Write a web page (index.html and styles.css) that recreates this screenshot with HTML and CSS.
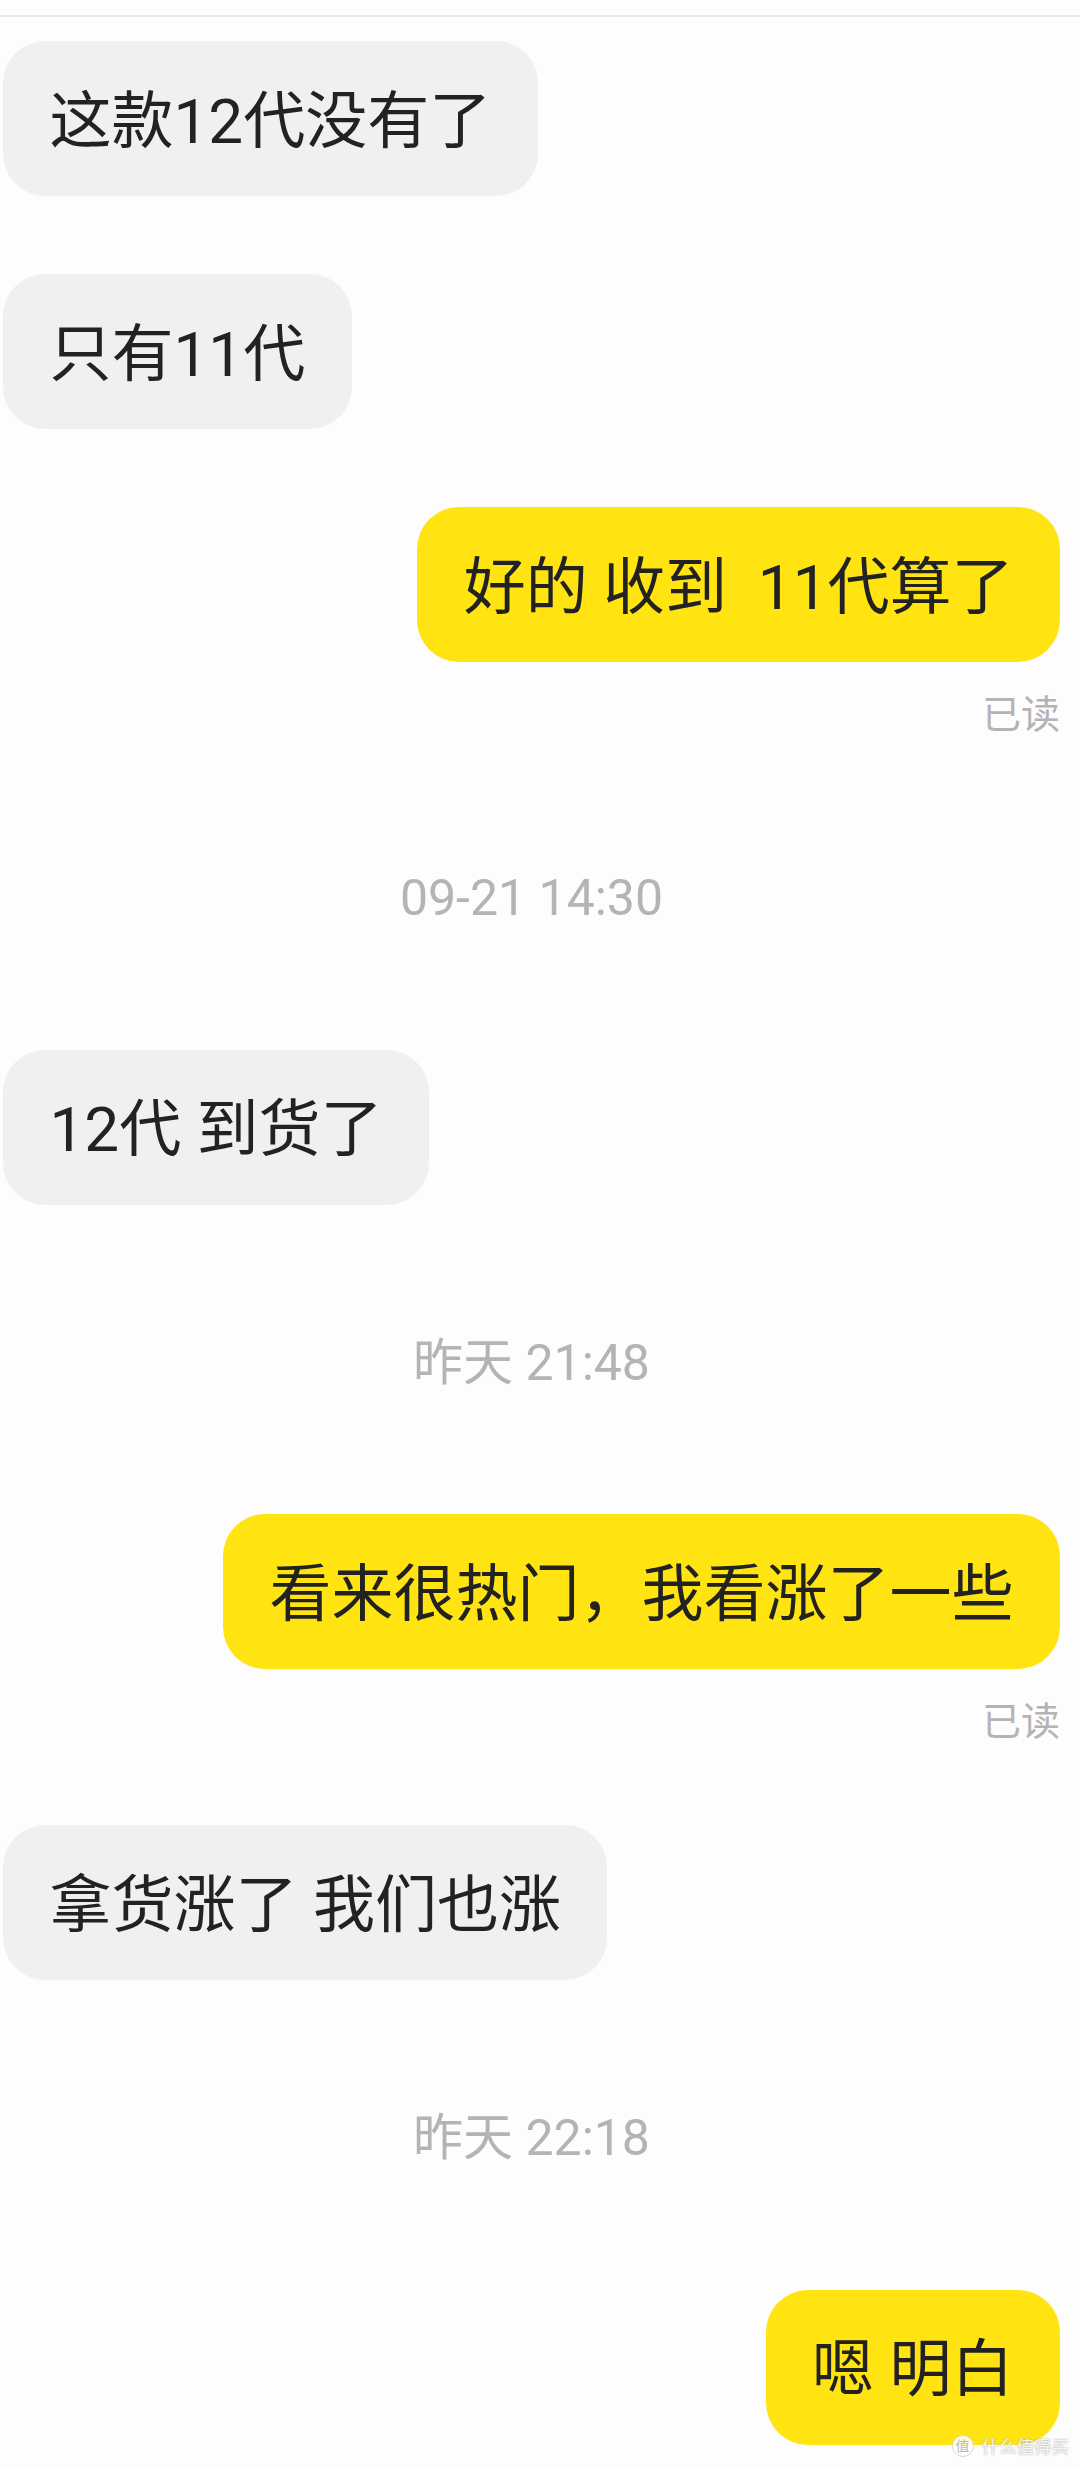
FILE: index.html
```html
<!DOCTYPE html>
<html lang="zh-CN">
<head>
    <meta charset="UTF-8">
    <meta name="viewport" content="width=device-width, initial-scale=1.0">
    <title>聊天记录</title>
    <link rel="stylesheet" href="styles.css">
</head>
<body>
    <div class="chat">
        <div class="msg left"><div class="bubble">这款12代没有了</div></div>
        <div class="msg left"><div class="bubble">只有11代</div></div>
        <div class="msg right">
            <div class="bubble">好的 收到&nbsp; 11代算了</div>
            <div class="read">已读</div>
        </div>

        <div class="time">09-21 14:30</div>
        <div class="msg left after-time"><div class="bubble">12代 到货了</div></div>

        <div class="time">昨天 21:48</div>
        <div class="msg right after-time">
            <div class="bubble">看来很热门，我看涨了一些</div>
            <div class="read">已读</div>
        </div>
        <div class="msg left"><div class="bubble">拿货涨了 我们也涨</div></div>

        <div class="time">昨天 22:18</div>
        <div class="msg right after-time"><div class="bubble">嗯 明白</div></div>
    </div>

    <div class="watermark">
        <span class="wm-logo">值</span>
        <span class="wm-text">什么值得买</span>
    </div>
</body>
</html>
```

FILE: styles.css
```css
* {
    box-sizing: border-box;
}

html, body {
    margin: 0;
    padding: 0;
}

body {
    position: relative;
    width: 1080px;
    height: 2469px;
    overflow: hidden;
    background-color: #fdfdfd;
    font-family: Roboto, "Noto Sans CJK SC", sans-serif;
}

.chat {
    height: 2469px;
    padding: 41px 20px 0 3px;
    display: flex;
    flex-direction: column;
    background: linear-gradient(#e9e9e9, #e9e9e9) 0 15px / 100% 2px no-repeat;
}

.msg {
    display: flex;
    flex-direction: column;
    flex-shrink: 0;
    margin-bottom: 78px;
}

.left {
    align-items: flex-start;
}

.right {
    align-items: flex-end;
}

.bubble {
    height: 155px;
    padding: 0 46.5px 6px;
    border-radius: 42px;
    display: flex;
    align-items: center;
    white-space: pre;
    font-size: 62px;
    color: #222222;
    background-color: #f0f0f3;
}

.right .bubble {
    background-color: #ffe411;
}

.read {
    margin-top: 28px;
    height: 50px;
    line-height: 50px;
    font-size: 39px;
    color: #b4b4b4;
}

.time {
    flex-shrink: 0;
    height: 60px;
    line-height: 60px;
    margin-top: 50px;
    text-align: center;
    font-size: 50px;
    color: #b4b4b4;
}

.msg.after-time {
    margin-top: 121.5px;
}

.watermark {
    position: absolute;
    right: 11px;
    bottom: 11px;
    display: flex;
    align-items: center;
    gap: 8px;
    color: #f6f6f6;
    text-shadow: 0 0 2px #9a9a9a;
}

.wm-logo {
    width: 22px;
    height: 22px;
    border-radius: 50%;
    border: 1px solid #d6d6d6;
    background-color: rgba(255, 255, 255, 0.85);
    color: #b8b8b8;
    text-shadow: none;
    font-size: 14px;
    line-height: 20px;
    text-align: center;
}

.wm-text {
    font-size: 17.5px;
}
```
